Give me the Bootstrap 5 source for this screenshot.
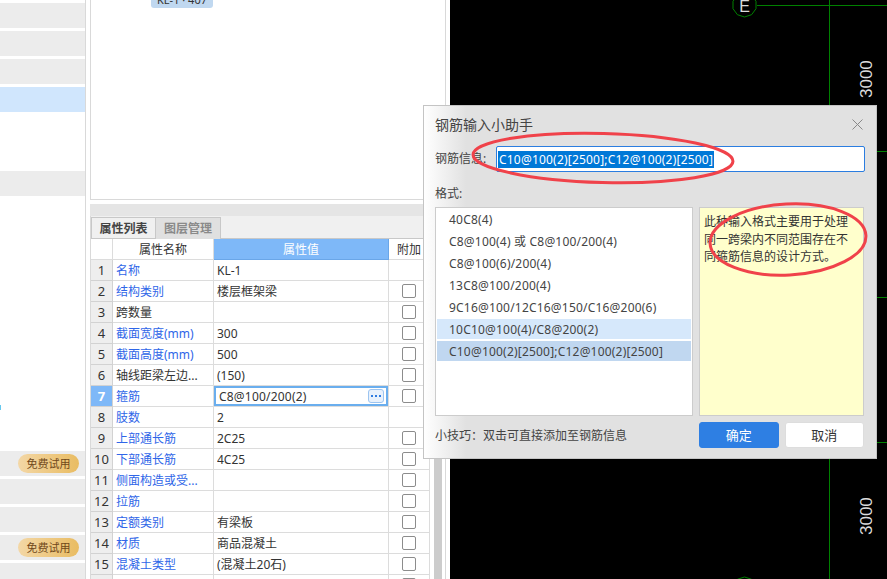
<!DOCTYPE html>
<html lang="zh-CN">
<head>
<meta charset="UTF-8">
<meta name="viewport" content="width=device-width, initial-scale=1.0">
<title>钢筋输入小助手</title>
<link href="https://cdn.jsdelivr.net/npm/bootstrap@5.3.0/dist/css/bootstrap.min.css" rel="stylesheet">
<style>
html, body { height: 579px; overflow: hidden; }
body { font-family: "Noto Sans", "Noto Sans CJK SC", sans-serif; font-size: 12px; color: #333; background: #fff; }

/* left list */
.side-panel { width: 86px; height: 579px; padding-top: 3px; border-right: 1px solid #d9d9d9; overflow: hidden; flex: none; }
.side-row { height: 25px; margin-bottom: 3px; position: relative; }
.side-grey { background: #ececec; }
.side-sel { background: #d0e6fd; }
.side-tick { position: absolute; left: 0; top: 10px; width: 1px; height: 5px; background: #66c8ee; }
.trial-tag { position: absolute; left: 18px; top: 3px; width: 61px; height: 19px; border-radius: 10px; background: linear-gradient(90deg, #f3d7a6, #e9bc62); color: #70481a; font-size: 11px; line-height: 19px; text-align: center; }

/* middle */
.mid-panel { width: 360px; margin-left: 4px; padding-right: 4px; flex: none; height: 579px; overflow: hidden; }
.preview-box { height: 200px; border: 1px solid #d9d9d9; border-top: 0; }
.preview-chip { width: 62px; height: 8px; margin-left: 60px; background: #c0d8f0; border-radius: 0 0 3px 3px; overflow: hidden; line-height: 16px; text-align: center; font-size: 11px; }
.preview-chip span { display: block; margin-top: -8px; }
.split-bar { height: 12px; margin-top: 4px; background: #e5e5e5; }
.prop-wrap { border-left: 1px solid #d9d9d9; border-right: 1px solid #d9d9d9; }
.tab-strip { height: 23px; background: #f0f0f0; padding-top: 1px; border-bottom: 1px solid #c8c8c8; }
.tab-item { width: 65px; height: 22px; line-height: 21px; text-align: center; border: 1px solid #c8c8c8; border-bottom: 0; font-weight: 700; color: #444; }
.tab-off { background: #e0e0e0; color: #8a8a8a; border-left: 0; }

.prop-table { table-layout: fixed; width: 339px; margin: 0; border-collapse: separate; border-spacing: 0; font-size: 12px; }
.prop-table th, .prop-table td { height: 21px; padding: 0 0 0 3px; border: 0; border-right: 1px solid #dcdcdc; border-bottom: 1px solid #dcdcdc; font-weight: 400; color: #333; white-space: nowrap; box-shadow: none; vertical-align: top; }
.cell-in { height: 20px; line-height: 19px; padding-top: 1px; overflow: hidden; }
.prop-table .num-cell { background: #eeeeee; text-align: center; padding: 0; font-size: 13px; border-color: #d2d2d2; }
.prop-table .name-blue { color: #2f66e8; }
.prop-table th { text-align: center; padding: 0; }
.prop-table th.val-head { background: #7eb8f8; color: #fff; border-color: #6aa6e8; }
.prop-table .num-on { background: #7eb8f8; color: #fff; font-weight: 700; }
.prop-table td.val-on { position: relative; padding-left: 5px; letter-spacing: .2px; }
.val-on-frame { position: absolute; inset: 0; border: 2px solid #6aaeee; }
.more-btn { position: absolute; right: 4px; top: 3px; width: 16px; height: 14px; border: 1px solid #9cc4f0; border-radius: 3px; background: #e8f1fc; display: flex; align-items: center; justify-content: center; }
.prop-table .chk-cell { padding: 0; }
.prop-table .form-check-input { width: 14px; height: 14px; margin: 3px 0 0 13px; border: 1px solid #8c8c8c; border-radius: 2px; display: block; }
.scroll-track { width: 8px; margin-left: 4px; margin-top: 21px; background: #cccccc; height: 340px; flex: none; }

/* drawing */
.cad-area { flex: 1 1 auto; height: 579px; background: #000; position: relative; overflow: hidden; }
.cad-area svg { position: absolute; left: 0; top: 0; }
.cad-text { font-family: "Liberation Sans", sans-serif; fill: #dcdcdc; }

/* dialog */
.rebar-dialog { position: absolute; left: 423px; top: 105px; width: 454px; height: 354px; border: 1px solid #c4c4c4; background: linear-gradient(90deg, #fff 0, #e1e1e1 42px); padding: 10px 12px 0 11px; }
.dlg-title { height: 18px; font-size: 14px; line-height: 18px; color: #444; }
.dlg-close { position: absolute; right: 13px; top: 13px; }
.dlg-line { margin-top: 12px; height: 26px; }
.dlg-line label { width: 61px; color: #444; flex: none; }
.rebar-input { width: 369px; height: 26px; padding: 4px 1px; border: 1px solid #2b7de0; border-radius: 2px; font-size: 12px; line-height: 17px; letter-spacing: .2px; flex: none; }
.rebar-input span { background: #0078d7; color: #fff; display: inline-block; padding: 0 1px; }
.fmt-label { margin-top: 13px; height: 17px; line-height: 17px; color: #444; }
.dlg-cols { margin-top: 5px; height: 209px; gap: 6px; }
.fmt-list { width: 258px; flex: none; padding: 1px; border: 1px solid #ccc; border-radius: 0; background: #fff; }
.fmt-list .list-group-item { height: 20px; margin-bottom: 2px; padding: 1px 0 0 12px; border: 0; border-radius: 0; background: transparent; color: #444; font-size: 12px; line-height: 20px; letter-spacing: .2px; }
.fmt-list .fmt-hover { background: #d6e8fb; }
.fmt-list .fmt-sel { background: #c0d7f0; }
.fmt-note { width: 165px; flex: none; padding: 5px 4px; background: #ffffcc; border: 1px solid #ccc; line-height: 17.5px; color: #333; }
.dlg-foot { margin-top: 6px; }
.dlg-foot .tip-text { color: #444; width: 264px; flex: none; padding-top: 1px; }
.dlg-foot .btn { width: 80px; height: 26px; padding: 0; font-size: 13px; border-radius: 3px; line-height: 24px; }
.btn-ok { background: #2e7fe3; border-color: #2e7fe3; color: #fff; }
.btn-no { background: #fff; border-color: #ddd; color: #333; margin-left: 6px; }
.mark-layer { position: absolute; left: 0; top: 0; pointer-events: none; }
</style>
</head>
<body>
<div class="d-flex">
    <div class="side-panel" id="sideList"></div>

    <div class="mid-panel">
        <div class="preview-box">
            <div class="preview-chip"><span>KL-1 · 407</span></div>
        </div>
        <div class="split-bar"></div>
        <div class="prop-wrap">
            <div class="tab-strip d-flex">
                <div class="tab-item">属性列表</div>
                <div class="tab-item tab-off">图层管理</div>
            </div>
            <div class="d-flex align-items-start">
                <table class="table prop-table">
                    <colgroup><col style="width:22px"><col style="width:101px"><col style="width:175px"><col style="width:41px"></colgroup>
                    <thead>
                        <tr><th></th><th><div class="cell-in">属性名称</div></th><th class="val-head"><div class="cell-in">属性值</div></th><th><div class="cell-in">附加</div></th></tr>
                    </thead>
                    <tbody id="propRows"></tbody>
                </table>
                <div class="scroll-track"></div>
            </div>
        </div>
    </div>

    <div class="cad-area">
        <svg width="437" height="579" viewBox="450 0 437 579">
            <g stroke="#008000" stroke-width="1" fill="none">
                <path d="M757 5.5H887M757 151.5H887M757 297.5H887M757 442.5H887M829.5 0V579"/>
                <polygon points="756,8.7 751.6,14.7 744.5,17 737.4,14.7 733,8.7 733,1.3 737.4,-4.7 744.5,-7 751.6,-4.7 756,1.3"/>
                <polygon points="756,592.7 751.6,598.7 744.5,601 737.4,598.7 733,592.7 733,585.3 737.4,579.3 744.5,577 751.6,579.3 756,585.3"/>
            </g>
            <text class="cad-text" x="744.5" y="12" font-size="16" text-anchor="middle">E</text>
            <text class="cad-text" font-size="17" transform="translate(872 98) rotate(-90)">3000</text>
            <text class="cad-text" font-size="17" transform="translate(872 535) rotate(-90)">3000</text>
        </svg>
    </div>
</div>

<div class="rebar-dialog">
    <div class="dlg-title">钢筋输入小助手</div>
    <svg class="dlg-close" width="11" height="11" viewBox="0 0 11 11"><path d="M.5.5l10 10M10.5.5l-10 10" stroke="#888" stroke-width="1" fill="none"/></svg>
    <div class="dlg-line d-flex align-items-center">
        <label>钢筋信息:</label>
        <div class="form-control rebar-input"><span>C10@100(2)[2500];C12@100(2)[2500]</span></div>
    </div>
    <div class="fmt-label">格式:</div>
    <div class="dlg-cols d-flex">
        <ul class="list-group fmt-list">
            <li class="list-group-item">40C8(4)</li>
            <li class="list-group-item">C8@100(4) 或 C8@100/200(4)</li>
            <li class="list-group-item">C8@100(6)/200(4)</li>
            <li class="list-group-item">13C8@100/200(4)</li>
            <li class="list-group-item">9C16@100/12C16@150/C16@200(6)</li>
            <li class="list-group-item fmt-hover">10C10@100(4)/C8@200(2)</li>
            <li class="list-group-item fmt-sel">C10@100(2)[2500];C12@100(2)[2500]</li>
        </ul>
        <div class="fmt-note">此种输入格式主要用于处理同一跨梁内不同范围存在不同箍筋信息的设计方式。</div>
    </div>
    <div class="dlg-foot d-flex align-items-center">
        <div class="tip-text">小技巧&#xFF1A;双击可直接添加至钢筋信息</div>
        <button type="button" class="btn btn-ok">确定</button>
        <button type="button" class="btn btn-no">取消</button>
    </div>
</div>

<svg class="mark-layer" width="887" height="579" viewBox="0 0 887 579">
    <g fill="none" stroke="#f0424a" stroke-width="3">
        <ellipse cx="603" cy="158" rx="130" ry="24.5" transform="rotate(1.5 603 158)"/>
        <ellipse cx="788" cy="239.5" rx="78" ry="35.5" transform="rotate(-3 788 239.5)"/>
    </g>
</svg>

<script>
// left list rows: y = 3 + 28 * i
var sideList = document.getElementById('sideList');
var greyRows = [0, 1, 2, 6, 16, 17, 18, 19, 20];
for (var i = 0; i < 21; i++) {
    var row = document.createElement('div');
    row.className = 'side-row';
    if (i === 3) row.className += ' side-sel';
    if (greyRows.indexOf(i) >= 0) row.className += ' side-grey';
    if (i === 14) row.innerHTML = '<span class="side-tick"></span>';
    if (i === 16 || i === 19) row.innerHTML = '<span class="trial-tag">免费试用</span>';
    sideList.appendChild(row);
}

// [name, blue label, value, has checkbox]
var props = [
    ['名称', true, 'KL-1', false],
    ['结构类别', true, '楼层框架梁', true],
    ['跨数量', false, '', true],
    ['截面宽度(mm)', true, '300', true],
    ['截面高度(mm)', true, '500', true],
    ['轴线距梁左边...', false, '(150)', true],
    ['箍筋', true, 'C8@100/200(2)', true],
    ['肢数', true, '2', false],
    ['上部通长筋', true, '2C25', true],
    ['下部通长筋', true, '4C25', true],
    ['侧面构造或受...', true, '', true],
    ['拉筋', true, '', true],
    ['定额类别', true, '有梁板', true],
    ['材质', true, '商品混凝土', true],
    ['混凝土类型', true, '(混凝土20石)', true],
    ['', false, '', true]
];
var dots = '<svg width="10" height="2" viewBox="0 0 10 2"><path d="M0 0h2v2H0zM4 0h2v2H4zM8 0h2v2H8z" fill="#2f7be0"/></svg>';
var html = '';
props.forEach(function (p, idx) {
    var on = idx === 6;
    var num = idx < 15 ? idx + 1 : '';
    html += '<tr><td class="num-cell' + (on ? ' num-on' : '') + '"><div class="cell-in">' + num + '</div></td>';
    html += '<td' + (p[1] ? ' class="name-blue"' : '') + '><div class="cell-in">' + p[0] + '</div></td>';
    if (on) {
        html += '<td class="val-on"><span class="val-on-frame"></span><div class="cell-in">' + p[2] + '</div><span class="more-btn">' + dots + '</span></td>';
    } else {
        html += '<td><div class="cell-in">' + p[2] + '</div></td>';
    }
    html += '<td class="chk-cell">' + (p[3] ? '<input class="form-check-input" type="checkbox">' : '') + '</td></tr>';
});
document.getElementById('propRows').innerHTML = html;
</script>
<script src="https://cdn.jsdelivr.net/npm/bootstrap@5.3.0/dist/js/bootstrap.bundle.min.js"></script>
</body>
</html>
